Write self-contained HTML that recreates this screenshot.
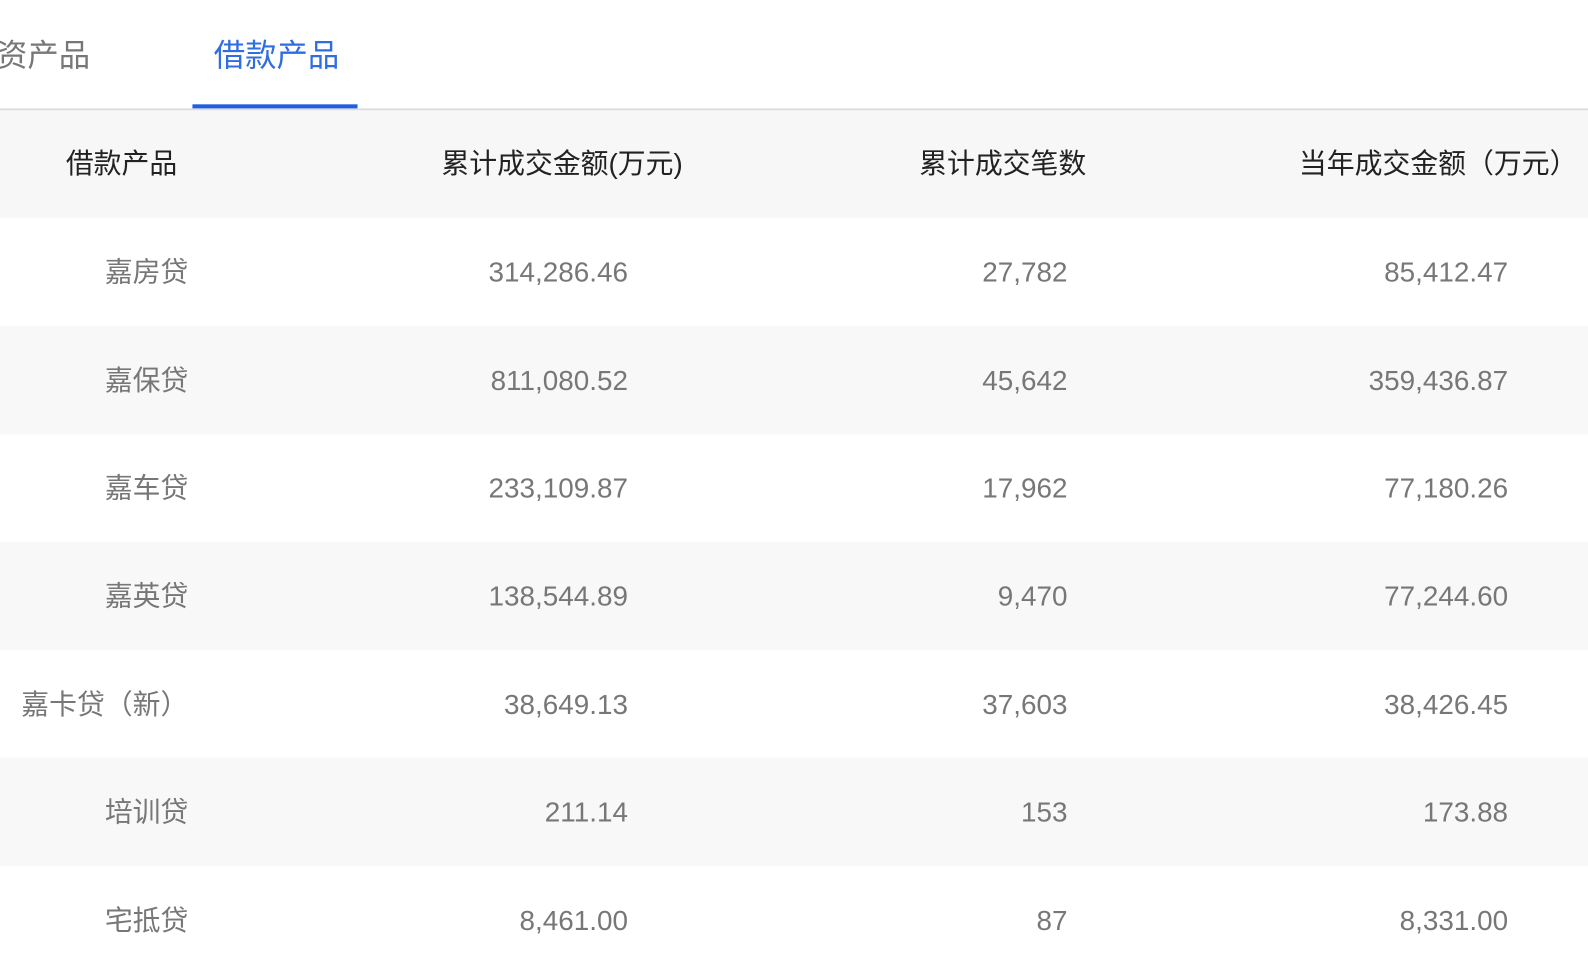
<!DOCTYPE html>
<html><head><meta charset="utf-8"><style>
body{margin:0;width:1588px;height:980px;background:#fff;overflow:hidden;position:relative;font-family:"Liberation Sans","Noto Sans CJK SC",sans-serif}
#w{position:absolute;left:0;top:0;width:1568px;height:968px;transform:scale(1.0128);transform-origin:0 0}
.a{position:absolute;white-space:nowrap;line-height:40px}
.tab{font-size:31px;top:35px}
.row{position:absolute;left:0;width:1600px}
.h{color:#222;font-size:27.5px}
.d{color:#777;font-size:27.5px}
.c{transform:translateX(-50%)}
</style></head><body><div id="w">
<div class="a tab" style="left:-4px;color:#777">资产品</div>
<div class="a tab" style="left:211px;color:#2f6ee0">借款产品</div>
<div style="position:absolute;left:0;top:107px;width:1600px;height:2px;background:#ddd"></div>
<div style="position:absolute;left:190px;top:103px;width:163px;height:4px;background:#1f5fe0"></div>
<div class="row" style="top:109px;height:106px;background:#f7f7f7"></div>
<div class="a h c" style="left:120px;top:142px">借款产品</div>
<div class="a h c" style="left:555px;top:142px">累计成交金额(万元)</div>
<div class="a h c" style="left:990px;top:142px">累计成交笔数</div>
<div class="a h c" style="left:1420px;top:142px">当年成交金额（万元）</div>
<div id="t"></div>
</div>
<script>
var d=[["嘉房贷","314,286.46","27,782","85,412.47"],["嘉保贷","811,080.52","45,642","359,436.87"],["嘉车贷","233,109.87","17,962","77,180.26"],["嘉英贷","138,544.89","9,470","77,244.60"],["嘉卡贷（新）","38,649.13","37,603","38,426.45"],["培训贷","211.14","153","173.88"],["宅抵贷","8,461.00","87","8,331.00"]];
var h="";
d.forEach(function(r,i){var top=215+i*106.67;var cy=top+54-20;
if(i%2==1)h+='<div class="row" style="top:'+top+'px;height:107px;background:#f8f8f8"></div>';
h+='<div class="a d" style="right:'+(1568-186)+'px;top:'+cy+'px">'+r[0]+'</div>';
h+='<div class="a d" style="right:'+(1568-620)+'px;top:'+cy+'px">'+r[1]+'</div>';
h+='<div class="a d" style="right:'+(1568-1054)+'px;top:'+cy+'px">'+r[2]+'</div>';
h+='<div class="a d" style="right:'+(1568-1489)+'px;top:'+cy+'px">'+r[3]+'</div>';});
document.getElementById("t").innerHTML=h;
</script>
</body></html>
